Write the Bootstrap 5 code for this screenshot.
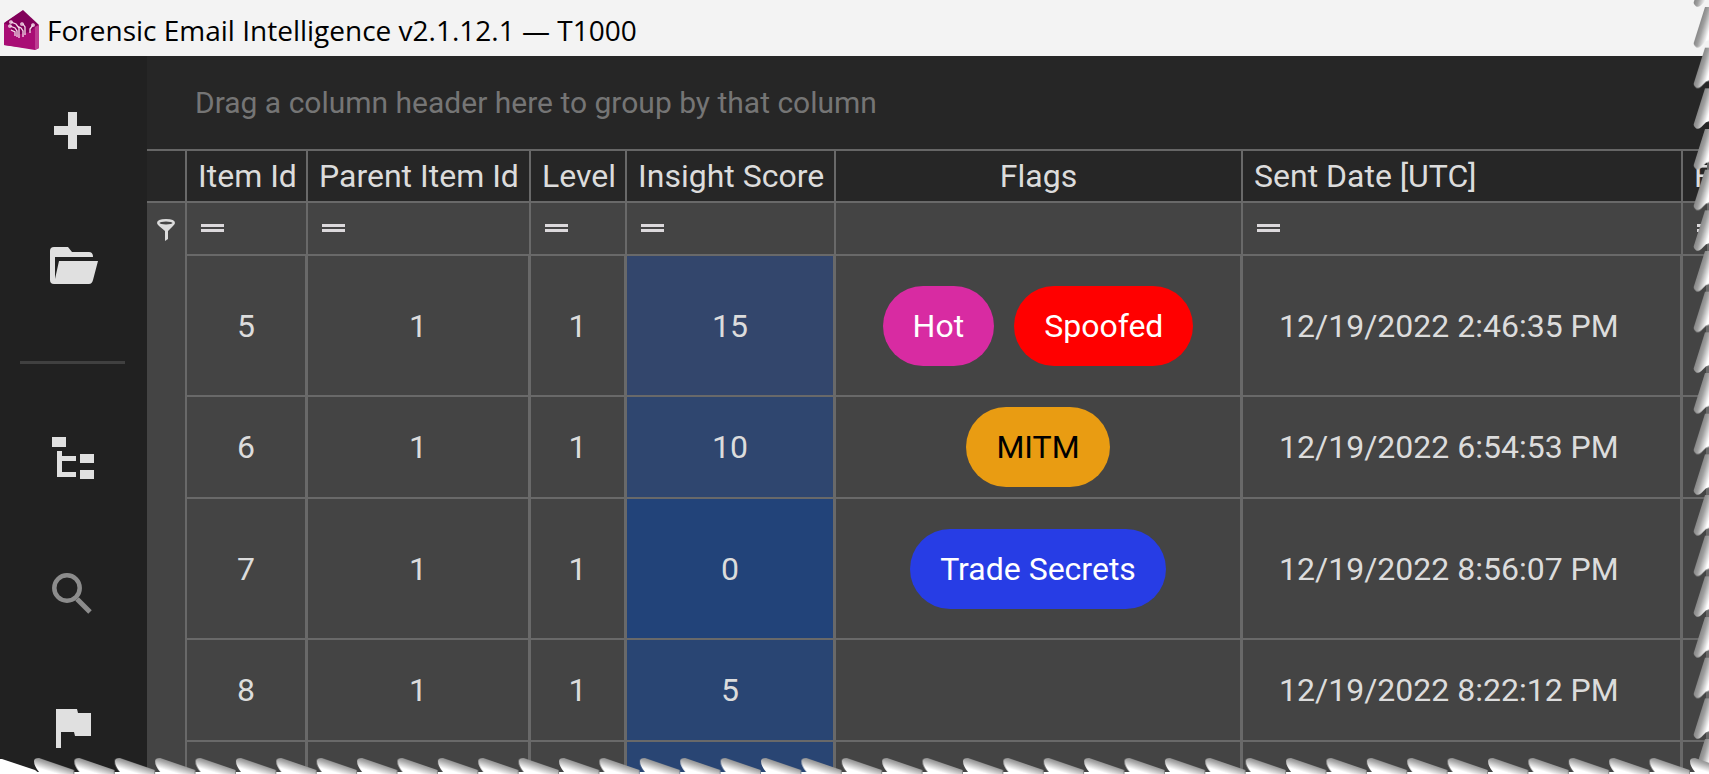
<!DOCTYPE html>
<html lang="en" data-bs-theme="dark">
<head>
<meta charset="utf-8">
<meta name="viewport" content="width=device-width, initial-scale=1">
<title>Forensic Email Intelligence</title>
<link href="https://cdn.jsdelivr.net/npm/bootstrap@5.3.0/dist/css/bootstrap.min.css" rel="stylesheet">
<style>
  body { font-family: Roboto, "Liberation Sans", sans-serif; font-size: 32px; line-height: 40px; color: #dcdcdc; background: #444; }
  .title-bar { height: 56px; background: #f3f3f3; padding: 4px 4px 0; font-family: "Open Sans", "Noto Sans", sans-serif; }
  .title-bar h1 { font-size: 28px; line-height: 48px; font-weight: 400; color: #000; }
  .side-rail { width: 147px; background: #212121; padding-top: 7px; }
  .rail-btn { height: 136px; color: #e0e0e0; }
  .rail-btn:disabled { color: #8c8c8c; opacity: 1; border: 0; }
  .rail-line { height: 3px; margin: 26px 22px 26px 20px; background: #404040; }
  .group-panel { background: #262626; color: #757575; padding: 27px 48px 26px; font-size: 30px; border-bottom: 2px solid #666; }
  .grid-table { table-layout: fixed; border-collapse: separate; border-spacing: 0; width: 100%; }
  .grid-table th, .grid-table td { border: 0 solid #696969; border-width: 0 3px 2px 0; padding: 0; text-align: center; vertical-align: middle; white-space: nowrap; overflow: hidden; }
  .grid-table .gutter { border-right-width: 2px; }
  .grid-table thead th { background: #262626; font-weight: 400; padding: 5px 0 5px 11px; text-align: left; border-right-width: 2px; }
  .grid-table thead th.mid { text-align: center; padding-left: 0; }
  .grid-table .filters td { text-align: left; padding: 0 0 0 14px; height: 53px; border-right-width: 2px; }
  .grid-table td.gutter { vertical-align: top; border-bottom: 0; }
  .grid-table .filters td.gutter { padding: 0; }
  .grid-table td.sent { text-align: left; padding-left: 36px; }
  .row-tall td { height: 141px; }
  .row-short td { height: 102px; }
  .flag-pill { height: 80px; padding: 0 30px; border-radius: 40px; display: inline-flex; align-items: center; color: #fff; }
  .s15 { background: #33466c; } .s10 { background: #2f466f; } .s5 { background: #294573; } .s0 { background: #224379; }
  .f-hot { background: #d82ba2; } .f-spoof { background: #f00; } .f-mitm { background: #e99c12; color: #000; } .f-trade { background: #273de5; }
  .torn-bottom { left: 0; bottom: 0; width: 100%; height: 16px; }
  .torn-right { right: 0; top: 0; width: 16px; height: 100%; }
</style>
</head>
<body class="vh-100 overflow-hidden position-relative d-flex flex-column">
<svg width="0" height="0" class="position-absolute" aria-hidden="true">
  <symbol id="eq" viewBox="0 0 23 9"><path fill="#dcd9dc" d="M0 0h23v3H0zM0 5h23v3H0z"/></symbol>
</svg>

<header class="title-bar d-flex flex-shrink-0 align-items-center">
  <svg width="35" height="40" viewBox="0 0 35 40" class="flex-shrink-0" aria-hidden="true">
    <path fill="#82005a" d="M0 13 19 0l16 15-3 24L0 35z"/>
    <path fill="#a90d75" d="M0 13 16 21l19-6v23l-4 2-31-5z"/>
    <path fill="#82005a" d="M2 12 19 1l14 14-7 7-14 3z"/>
    <path fill="#bd3d91" d="m31 17 4-2v23l-4 2z"/>
    <g fill="none" stroke="#f5dbea" stroke-width="1.3"><path d="M7 12l5 2 3 4v10M6 16l5 2 2 3v6M7 20l4 2v4M13 16l4 2 2 3v6M19 14l2 3v8M26 23v-4l3-4"/><circle cx="7" cy="12" r="1.2"/><circle cx="6" cy="16" r="1.2"/><circle cx="18" cy="14" r="1.2"/><circle cx="29" cy="15" r="1.2"/></g>
  </svg>
  <h1 class="mb-0 ms-2 text-nowrap">Forensic Email Intelligence v2.1.12.1 — T1000</h1>
</header>

<div class="d-flex flex-grow-1 overflow-hidden">
  <nav class="side-rail flex-shrink-0 d-flex flex-column overflow-hidden" aria-label="Tools">
    <button class="btn rail-btn p-0 border-0 flex-shrink-0" aria-label="Add"><svg width="50" height="50" viewBox="0 0 50 50" fill="currentColor"><path d="M19 6h9v14h14v9H28v14h-9V29H5v-9h14z"/></svg></button>
    <button class="btn rail-btn p-0 border-0 flex-shrink-0" aria-label="Open"><svg width="50" height="50" viewBox="0 0 50 50" fill="currentColor"><path d="M5 5h14l4 5h17q4 0 4 5H6v22L10 19h39l-5 19q-1 4-4 4H5q-4 0-4-4V9q0-4 4-4z"/></svg></button>
    <div class="rail-line flex-shrink-0"></div>
    <button class="btn rail-btn p-0 border-0 flex-shrink-0" aria-label="Tree"><svg width="50" height="50" viewBox="0 0 50 50" fill="currentColor"><path d="M3 4h14v10H3zM31 21h14v9H31zM31 37h14v9H31zM8 18h5v5h14v5H13v11h14v5H8z"/></svg></button>
    <button class="btn rail-btn p-0 border-0 flex-shrink-0" aria-label="Search" disabled><svg width="50" height="50" viewBox="0 0 50 50" fill="none" stroke="currentColor"><circle cx="18" cy="19" r="12.700" stroke-width="4.500"/><path d="m28 30 13 13" stroke-width="5"/></svg></button>
    <button class="btn rail-btn p-0 border-0 flex-shrink-0" aria-label="Flag"><svg width="50" height="50" viewBox="0 0 50 50" fill="currentColor"><path d="M7 4h21l1 4h13v23H26l-1-4H12v16H7z"/></svg></button>
  </nav>

  <main class="flex-grow-1 overflow-hidden">
    <div class="group-panel">Drag a column header here to group by that column</div>
    <table class="grid-table">
      <colgroup><col style="width:40px"><col style="width:121px"><col style="width:223px"><col style="width:96px"><col style="width:209px"><col style="width:407px"><col style="width:440px"><col></colgroup>
      <thead>
        <tr><th class="gutter"></th><th>Item Id</th><th>Parent Item Id</th><th>Level</th><th>Insight Score</th><th class="mid">Flags</th><th>Sent Date [UTC]</th><th>F</th></tr>
      </thead>
      <tbody>
        <tr class="filters">
          <td class="gutter"><button class="btn p-0 border-0 d-block mx-auto mt-3" aria-label="Filter"><svg class="d-block" width="18" height="22" viewBox="0 0 18 22"><path fill="#dcdcdc" d="M0 4q0-4 9-4t9 4q0 1-2 3l-5 5v8l-3 2V12L2 7Q0 5 0 4z"/><ellipse cx="9" cy="4" rx="6.500" ry="1.500" fill="#444"/></svg></button></td>
          <td><button class="btn p-0 border-0 d-block" aria-label="Equals"><svg class="d-block" width="23" height="9"><use href="#eq"/></svg></button></td>
          <td><button class="btn p-0 border-0 d-block" aria-label="Equals"><svg class="d-block" width="23" height="9"><use href="#eq"/></svg></button></td>
          <td><button class="btn p-0 border-0 d-block" aria-label="Equals"><svg class="d-block" width="23" height="9"><use href="#eq"/></svg></button></td>
          <td><button class="btn p-0 border-0 d-block" aria-label="Equals"><svg class="d-block" width="23" height="9"><use href="#eq"/></svg></button></td>
          <td></td>
          <td><button class="btn p-0 border-0 d-block" aria-label="Equals"><svg class="d-block" width="23" height="9"><use href="#eq"/></svg></button></td>
          <td><button class="btn p-0 border-0 d-block" aria-label="Equals"><svg class="d-block" width="23" height="9"><use href="#eq"/></svg></button></td>
        </tr>
        <tr class="row-tall"><td class="gutter"></td><td>5</td><td>1</td><td>1</td><td class="s15">15</td><td><div class="d-flex justify-content-center"><span class="flag-pill f-hot me-3">Hot</span><span class="flag-pill f-spoof ms-1">Spoofed</span></div></td><td class="sent">12/19/2022 2:46:35 PM</td><td></td></tr>
        <tr class="row-short"><td class="gutter"></td><td>6</td><td>1</td><td>1</td><td class="s10">10</td><td><div class="d-flex justify-content-center"><span class="flag-pill f-mitm">MITM</span></div></td><td class="sent">12/19/2022 6:54:53 PM</td><td></td></tr>
        <tr class="row-tall"><td class="gutter"></td><td>7</td><td>1</td><td>1</td><td class="s0">0</td><td><div class="d-flex justify-content-center"><span class="flag-pill f-trade">Trade Secrets</span></div></td><td class="sent">12/19/2022 8:56:07 PM</td><td></td></tr>
        <tr class="row-short"><td class="gutter"></td><td>8</td><td>1</td><td>1</td><td class="s5">5</td><td></td><td class="sent">12/19/2022 8:22:12 PM</td><td></td></tr>
        <tr class="row-short"><td class="gutter"></td><td></td><td></td><td></td><td class="s5"></td><td></td><td class="sent"></td><td></td></tr>
      </tbody>
    </table>
  </main>
</div>

<!-- torn paper edges over the window -->
<svg class="torn-right position-absolute" aria-hidden="true">
  <defs>
    <linearGradient id="gr" gradientUnits="userSpaceOnUse" x1="5" y1="25" x2="15" y2="28"><stop offset="0" stop-color="#8c8c8c"/><stop offset=".3" stop-color="#a0a0a0"/><stop offset="1" stop-color="#fff"/></linearGradient>
    <pattern id="pr" patternUnits="userSpaceOnUse" y="7" width="16" height="40.670"><path fill="url(#gr)" d="M12 0h4v33l-3 1-5 5q-4 3-6 0-2-2-1-4z"/></pattern>
  </defs>
  <rect width="100%" height="100%" fill="url(#pr)"/>
</svg>
<svg class="torn-bottom position-absolute" aria-hidden="true">
  <defs>
    <linearGradient id="gb" gradientUnits="userSpaceOnUse" x1="20" y1="4" x2="17" y2="14"><stop offset="0" stop-color="#8c8c8c"/><stop offset=".3" stop-color="#a8a8a8"/><stop offset="1" stop-color="#fff"/></linearGradient>
    <pattern id="pb" patternUnits="userSpaceOnUse" x="34" width="40.390" height="16"><path fill="url(#gb)" d="M0 3q0-3 5-3l35 12v4H0v-2h5Q0 8 0 3z"/></pattern>
  </defs>
  <rect x="34" width="100%" height="16" fill="url(#pb)"/>
  <path fill="#fff" d="M0 1h2l33 11 5 4H0z"/>
</svg>
<script src="https://cdn.jsdelivr.net/npm/bootstrap@5.3.0/dist/js/bootstrap.bundle.min.js"></script>
</body>
</html>
